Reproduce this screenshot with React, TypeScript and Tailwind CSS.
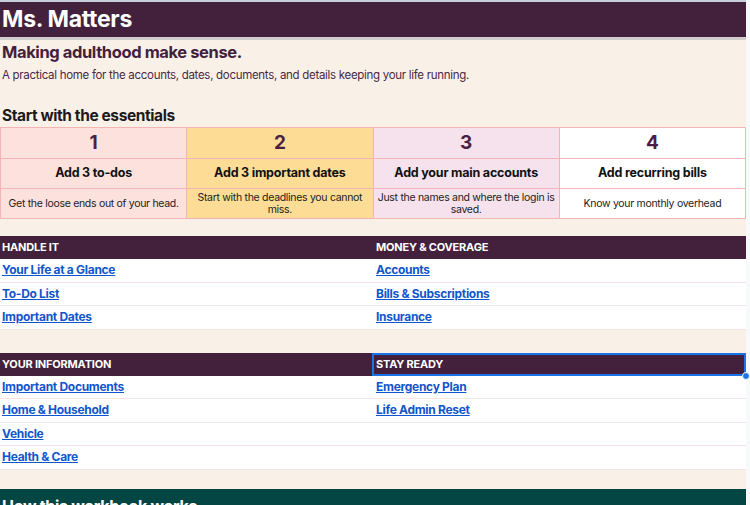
import React from "react";

const essentials = [
  { n: "1", title: "Add 3 to-dos", desc: "Get the loose ends out of your head.", bg: "bg-[#fde1dd]" },
  { n: "2", title: "Add 3 important dates", desc: "Start with the deadlines you cannot miss.", bg: "bg-[#fddd95]" },
  { n: "3", title: "Add your main accounts", desc: "Just the names and where the login is saved.", bg: "bg-[#f5e2ed]" },
  { n: "4", title: "Add recurring bills", desc: "Know your monthly overhead", bg: "bg-white" },
];

function LinkText({ children }: { children: React.ReactNode }) {
  return (
    <a href="#" className="text-[#1155cc] underline font-bold text-[12px] tracking-[-0.3px] leading-none">
      {children}
    </a>
  );
}

function Section({
  left,
  right,
  leftLinks,
  rightLinks,
  rows,
  selectedRight,
}: {
  left: string;
  right: string;
  leftLinks: string[];
  rightLinks: string[];
  rows: number;
  selectedRight?: boolean;
}) {
  return (
    <div className="flex flex-col">
      <div className="flex h-[23px] bg-[#43203c] text-white text-[11px] tracking-[-0.2px] font-bold">
        <div className="w-[372px] flex items-center px-[2px]">{left}</div>
        <div
          className={
            selectedRight
              ? "relative w-[374px] flex items-center px-[2px] border-2 border-[#1a73e8]"
              : "w-[374px] flex items-center px-[4px]"
          }
        >
          {right}
          {selectedRight && (
            <span className="absolute right-[-6px] bottom-[-6px] w-[8px] h-[8px] rounded-full bg-[#1a73e8] border border-white" />
          )}
        </div>
      </div>
      {Array.from({ length: rows }).map((_, i) => (
        <div key={i} className="flex h-[23.5px] bg-white border-b border-[#f4e4e4]">
          <div className="w-[372px] flex items-center px-[2px]">
            {leftLinks[i] && <LinkText>{leftLinks[i]}</LinkText>}
          </div>
          <div className="w-[374px] flex items-center px-[4px]">
            {rightLinks[i] && <LinkText>{rightLinks[i]}</LinkText>}
          </div>
        </div>
      ))}
    </div>
  );
}

export default function App() {
  return (
    <div
      className="w-[750px] h-[505px] overflow-hidden bg-[#f8f9fa] flex"
      style={{ fontFamily: "Inter, 'Noto Sans', sans-serif" }}
    >
      <div className="w-[746px] flex flex-col bg-[#f9f1e8] shrink-0">
        <div className="h-[2px] bg-[#c8cddd] shrink-0" />
        <div className="h-[35px] shrink-0 bg-[#43203c] flex items-center px-[2px] text-white text-[23px] font-bold tracking-[-0.3px]">
          Ms. Matters
        </div>
        <div className="h-[3px] shrink-0 bg-[#cfcccb]" />
        <div className="h-[24px] shrink-0 flex items-center px-[2px] text-[#43203c] text-[16.5px] tracking-[-0.4px] font-bold">
          Making adulthood make sense.
        </div>
        <div className="h-[23px] shrink-0 flex items-center px-[2px] text-[#4a2944] text-[11.5px] tracking-[-0.3px]">
          A practical home for the accounts, dates, documents, and details keeping your life running.
        </div>
        <div className="h-[17px] shrink-0" />
        <div className="h-[23px] shrink-0 flex items-center px-[2px] text-[#1d1a1c] text-[15.5px] tracking-[-0.4px] font-bold">
          Start with the essentials
        </div>
        <div className="grid grid-cols-4 shrink-0 border-t border-l border-[#f2b4b4]">
          {essentials.map((e) => (
            <div key={e.n} className={`flex flex-col ${e.bg} border-r border-[#f2b4b4]`}>
              <div className="h-[31px] flex items-center justify-center text-[19px] font-bold text-[#4a1f45] border-b border-[#f2b4b4]">
                {e.n}
              </div>
              <div className="h-[30px] flex items-center justify-center text-[12.5px] tracking-[-0.2px] font-bold text-[#111] border-b border-[#f2b4b4]">
                {e.title}
              </div>
              <div className="h-[30px] flex items-center justify-center text-center px-[4px] text-[10.5px] tracking-[-0.3px] leading-[12px] text-[#222] border-b border-[#f2b4b4]">
                {e.desc}
              </div>
            </div>
          ))}
        </div>
        <div className="h-[17px] shrink-0" />
        <Section
          left="HANDLE IT"
          right="MONEY & COVERAGE"
          leftLinks={["Your Life at a Glance", "To-Do List", "Important Dates"]}
          rightLinks={["Accounts", "Bills & Subscriptions", "Insurance"]}
          rows={3}
        />
        <div className="h-[23px] shrink-0" />
        <Section
          left="YOUR INFORMATION"
          right="STAY READY"
          leftLinks={["Important Documents", "Home & Household", "Vehicle", "Health & Care"]}
          rightLinks={["Emergency Plan", "Life Admin Reset"]}
          rows={4}
          selectedRight
        />
        <div className="h-[19px] shrink-0" />
        <div className="h-[30px] shrink-0 bg-[#034644] flex items-start pt-[5px] px-[2px] text-white text-[16px] tracking-[-0.3px] font-bold">
          How this workbook works
        </div>
      </div>
      <div className="w-[4px] bg-[#f8f9fa]" />
    </div>
  );
}
